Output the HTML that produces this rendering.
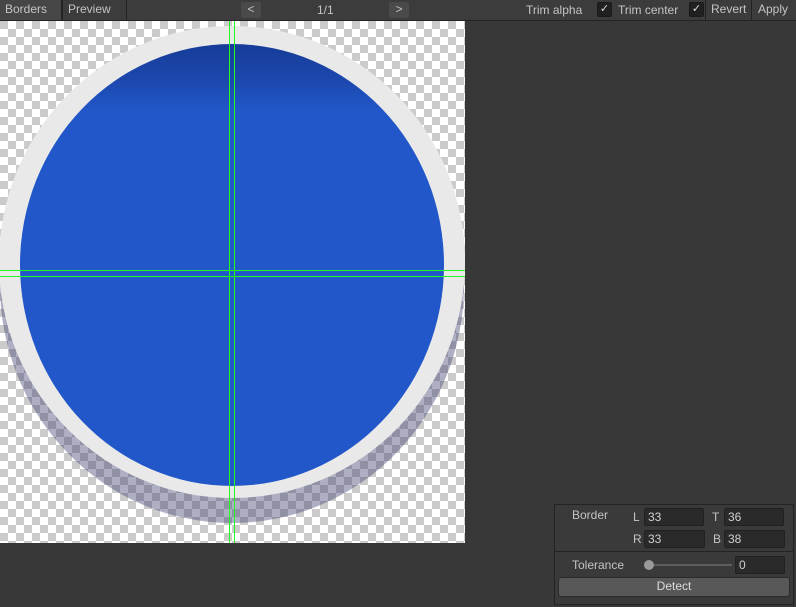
<!DOCTYPE html>
<html><head><style>
body{margin:0;width:796px;height:607px;background:#383838;font-family:"Liberation Sans",sans-serif;font-size:12px;color:#c4c4c4;overflow:hidden;position:relative}
.bar{position:absolute;left:0;top:0;width:796px;height:20px;background:#3c3c3c;border-bottom:1px solid #232323}
.t{position:absolute;top:3px}
.tab{position:absolute;top:0;height:20px;line-height:18px;padding:0 5px;border-right:1px solid #232323}
.btn{position:absolute;top:2px;height:16px;background:#4a4a4a;border-radius:2px;text-align:center;line-height:15px}
.cb{position:absolute;top:2px;width:13px;height:13px;background:#202020;border:1px solid #1a1a1a;border-radius:2px;color:#ddd;font-size:11px;line-height:13px;text-align:center}
.panel{position:absolute;left:554px;top:504px;width:238px;height:99px;border:1px solid #232323;background:#3a3a3a}
.fld{position:absolute;height:16px;background:#2a2a2a;border:1px solid #212121;border-radius:2px;color:#d0d0d0;line-height:16px;padding-left:3px;box-sizing:border-box;height:18px}
.lb{position:absolute}
</style></head><body>
<div class="bar">
<div class="tab" style="left:0;background:#464646;width:51px">Borders</div>
<div class="tab" style="left:62px;border-left:1px solid #232323;width:53px">Preview</div>
<div class="btn" style="left:241px;width:20px">&lt;</div>
<div class="t" style="left:317px">1/1</div>
<div class="btn" style="left:389px;width:20px">&gt;</div>
<div class="t" style="left:526px">Trim alpha</div>
<div class="cb" style="left:597px">✓</div>
<div class="t" style="left:618px">Trim center</div>
<div class="cb" style="left:689px">✓</div>
<div class="tab" style="left:705px;border-left:1px solid #232323;padding:0 5px">Revert</div>
<div class="tab" style="left:753px;border-right:none;padding:0 5px">Apply</div>
</div>
<svg style="position:absolute;left:0;top:21px" width="465" height="522" viewBox="0 21 465 522">
<defs>
<pattern id="ck" width="16" height="16" patternUnits="userSpaceOnUse" x="0" y="21">
<rect width="16" height="16" fill="#fff"/><rect width="8" height="8" fill="#cbcbcb"/><rect x="8" y="8" width="8" height="8" fill="#cbcbcb"/></pattern>
<linearGradient id="bg" x1="0" y1="0" x2="0" y2="1">
<stop offset="0" stop-color="#173c98"/><stop offset="0.08" stop-color="#1c47ad"/><stop offset="0.15" stop-color="#2157c8"/><stop offset="1" stop-color="#2157c8"/></linearGradient>
</defs>
<rect x="0" y="21" width="465" height="522" fill="url(#ck)"/>
<ellipse cx="232" cy="285" rx="232" ry="238" fill="#404070" opacity="0.42"/>
<ellipse cx="232" cy="262" rx="233" ry="236" fill="#e9e9e9"/>
<ellipse cx="232" cy="265" rx="212" ry="221" fill="url(#bg)"/>
<rect x="229" y="21" width="1" height="522" fill="#22ff22"/>
<rect x="234" y="21" width="1" height="522" fill="#22ff22"/>
<rect x="0" y="270" width="465" height="1" fill="#22ff22"/>
<rect x="0" y="276" width="465" height="1" fill="#22ff22"/>
</svg>
<div class="panel">
<div class="lb" style="left:17px;top:3px">Border</div>
<div class="lb" style="left:78px;top:5px">L</div>
<div class="fld" style="left:89px;top:3px;width:60px">33</div>
<div class="lb" style="left:157px;top:5px">T</div>
<div class="fld" style="left:169px;top:3px;width:60px">36</div>
<div class="lb" style="left:78px;top:27px">R</div>
<div class="fld" style="left:89px;top:25px;width:61px">33</div>
<div class="lb" style="left:158px;top:27px">B</div>
<div class="fld" style="left:169px;top:25px;width:61px">38</div>
<div style="position:absolute;left:0;top:46px;width:238px;height:1px;background:#232323"></div>
<div class="lb" style="left:17px;top:53px">Tolerance</div>
<div style="position:absolute;left:93px;top:59px;width:84px;height:2px;background:#5e5e5e"></div>
<div style="position:absolute;left:89px;top:55px;width:10px;height:10px;border-radius:50%;background:#999"></div>
<div class="fld" style="left:180px;top:51px;width:50px">0</div>
<div style="position:absolute;left:3px;top:72px;width:230px;height:18px;background:#585858;border:1px solid #2a2a2a;border-radius:3px;text-align:center;line-height:17px;color:#ddd">Detect</div>
</div>
</body></html>
